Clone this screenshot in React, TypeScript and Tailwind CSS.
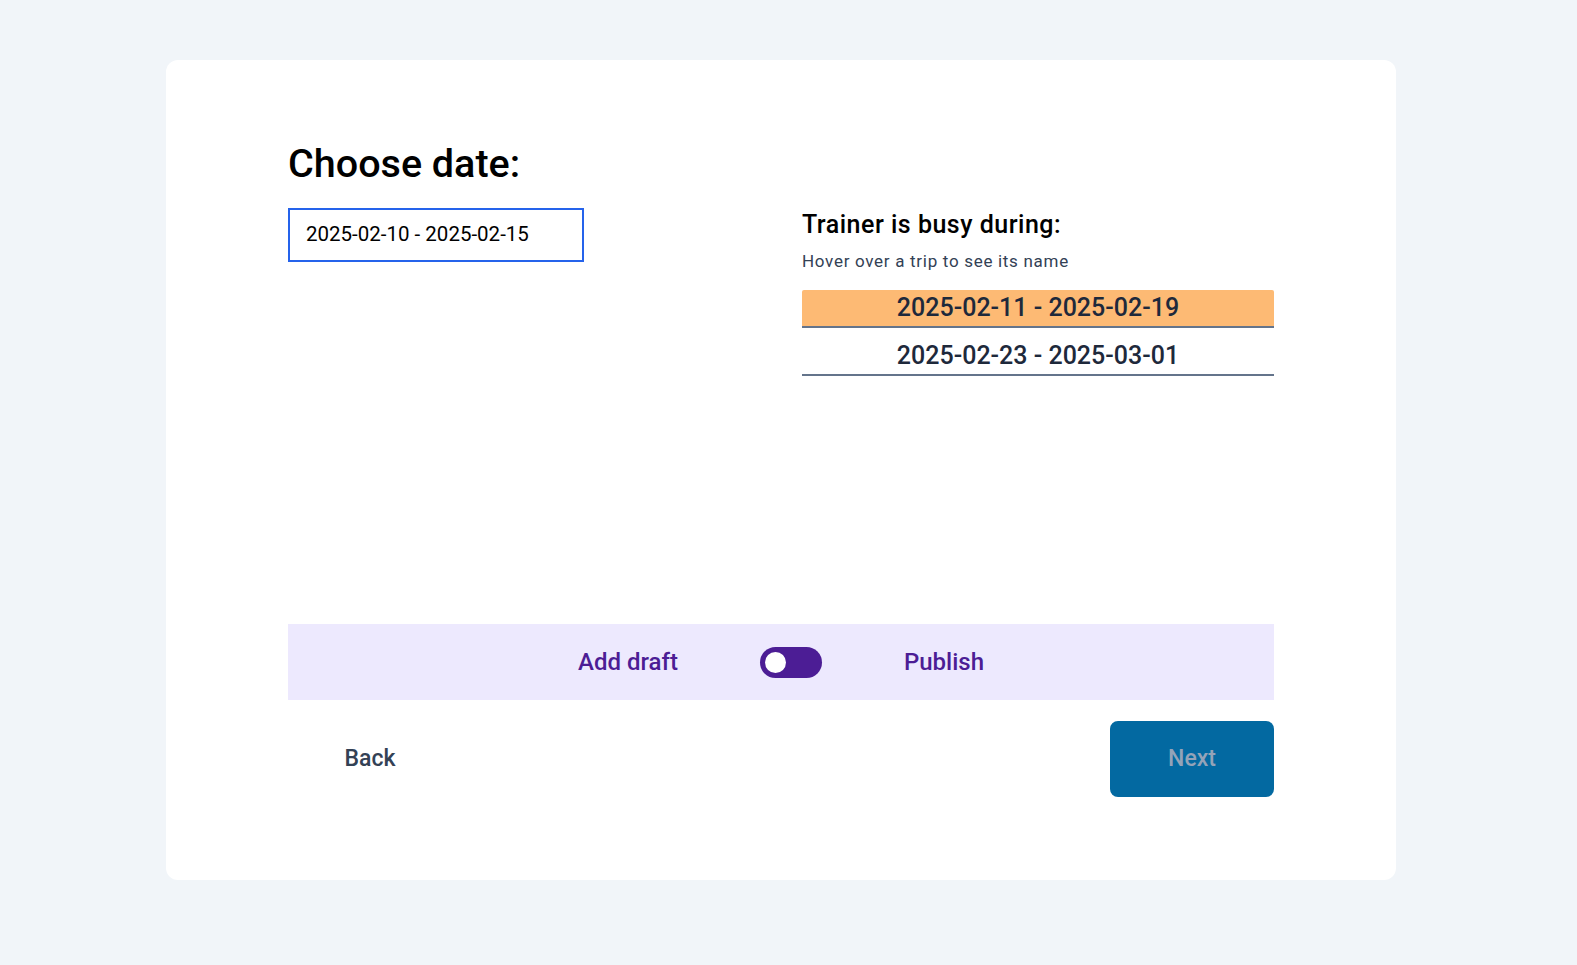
import React from "react";

export default function App() {
  const trips = ["2025-02-11 - 2025-02-19", "2025-02-23 - 2025-03-01"];
  return (
    <div
      className="min-h-screen bg-[#f1f5f9] pt-[60px] pb-[60px]"
      style={{ fontFamily: "Roboto, 'Noto Sans', sans-serif" }}
    >
      <div className="ml-[166px] flex h-[820px] w-[1230px] flex-col rounded-xl bg-white px-[122px] pt-20 pb-[82px]">
        <h1 className="mb-5 text-[39.5px] leading-[48px] font-medium text-black">Choose date:</h1>
        <div className="grid grid-cols-2 gap-[42px]">
          <div>
            <input
              readOnly
              value="2025-02-10 - 2025-02-15"
              className="h-[54px] w-[296px] border-2 border-[#2563eb] bg-white pb-[3px] pl-4 text-[20.5px] text-black outline-none"
            />
          </div>
          <div className="pt-[1px]">
            <h3 className="text-[25px] leading-8 font-medium tracking-[0.02em] text-black">
              Trainer is busy during:
            </h3>
            <p className="mt-2 text-[17px] leading-6 tracking-[0.7px] text-[#334155]">
              Hover over a trip to see its name
            </p>
            <div className="mt-[17px] flex flex-col gap-[10px]">
              {trips.map((t, i) => (
                <div
                  key={t}
                  className={
                    i === 0
                      ? "flex h-[38px] items-center justify-center rounded-t-[2px] border-b-2 border-[#64748b] bg-[#fdba74] text-[25px] font-medium text-[#1e293b]"
                      : "flex h-[38px] items-center justify-center border-b-2 border-[#64748b] bg-white text-[25px] font-medium text-[#1e293b]"
                  }
                >
                  {t}
                </div>
              ))}
            </div>
          </div>
        </div>

        <div className="mt-auto flex h-[76px] items-center justify-center gap-[82px] bg-[#ede9fe]">
          <span className="text-[24px] font-medium text-[#4c1d95]">Add draft</span>
          <div className="flex h-[31px] w-[62px] items-center rounded-full bg-[#4c1d95] pl-[5px]">
            <div className="h-[21px] w-[21px] rounded-full bg-white" />
          </div>
          <span className="text-[24px] font-medium text-[#4c1d95]">Publish</span>
        </div>

        <div className="mt-[21px] mb-[1px] flex items-center justify-between">
          <button className="flex h-[76px] w-[164px] items-center justify-center text-[23px] font-medium text-[#334155]">
            Back
          </button>
          <button className="flex h-[76px] w-[164px] items-center justify-center rounded-lg bg-[#0369a1] text-[23px] font-medium text-[#94a3b8]">
            Next
          </button>
        </div>
      </div>
    </div>
  );
}
